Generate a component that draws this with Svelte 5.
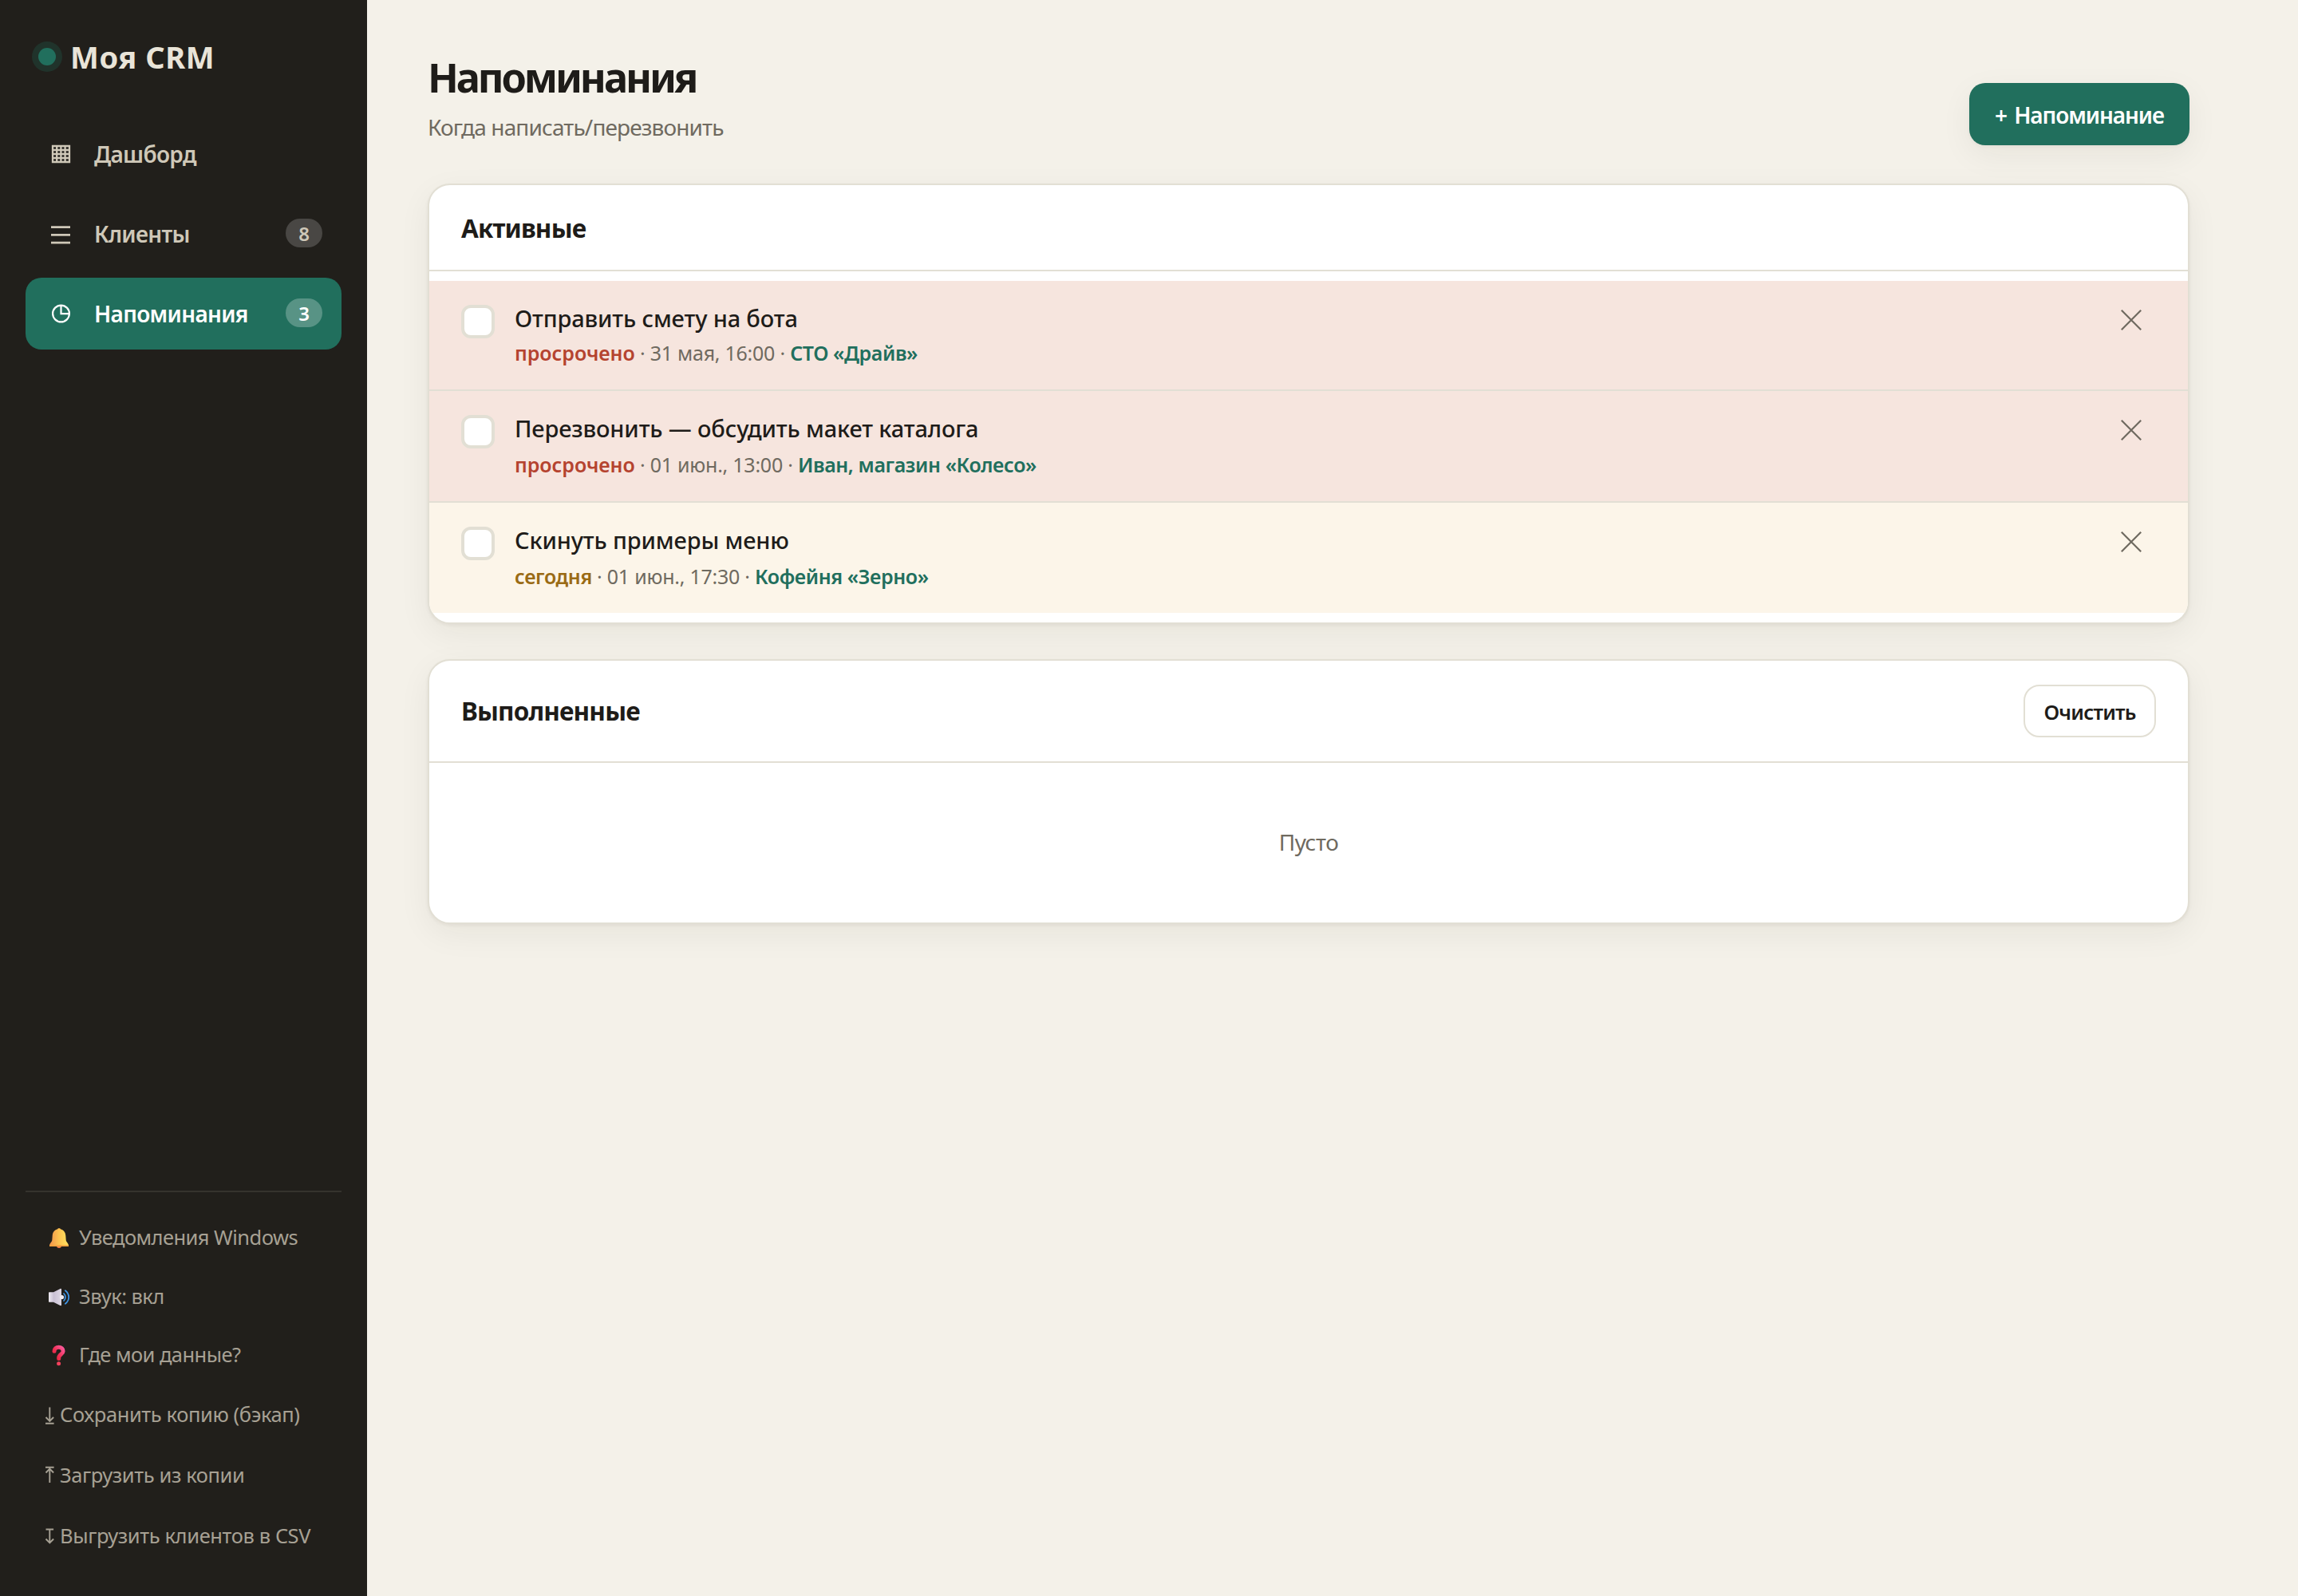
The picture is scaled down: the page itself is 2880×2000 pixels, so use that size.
<script>
  let nav = [
    { id: 'dashboard', label: 'Дашборд', count: 0 },
    { id: 'clients', label: 'Клиенты', count: 8 },
    { id: 'reminders', label: 'Напоминания', count: 3 }
  ];
  let page = 'reminders';

  let tools = [
    { icon: 'bell', label: 'Уведомления Windows' },
    { icon: 'sound', label: 'Звук: вкл' },
    { icon: 'help', label: 'Где мои данные?' },
    { icon: 'save', label: 'Сохранить копию (бэкап)' },
    { icon: 'load', label: 'Загрузить из копии' },
    { icon: 'csv', label: 'Выгрузить клиентов в CSV' }
  ];

  let reminders = [
    { text: 'Отправить смету на бота', status: 'overdue', date: '31 мая, 16:00', client: 'СТО «Драйв»' },
    { text: 'Перезвонить — обсудить макет каталога', status: 'overdue', date: '01 июн., 13:00', client: 'Иван, магазин «Колесо»' },
    { text: 'Скинуть примеры меню', status: 'today', date: '01 июн., 17:30', client: 'Кофейня «Зерно»' }
  ];
  const statusLabel = { overdue: 'просрочено', today: 'сегодня' };

  function remove(item) {
    reminders = reminders.filter((r) => r !== item);
  }
</script>

<div class="app">
  <aside>
    <div class="brand"><span class="dot"></span>Моя CRM</div>

    <nav>
      {#each nav as item (item.id)}
        <button class="nav-item" class:active={page === item.id} on:click={() => (page = item.id)}>
          <svg width="24" height="24" viewBox="0 0 24 24" fill="none" stroke="currentColor">
            {#if item.id === 'dashboard'}
              <path stroke-width="2.3" d="M2 2h21v20H2zM7.2 2v20M12.4 2v20M17.6 2v20M2 7h21M2 12h21M2 17h21" />
            {:else if item.id === 'clients'}
              <path stroke-width="2.7" d="M0 3.6h24M0 13.4h24M0 23.2h24" />
            {:else}
              <circle cx="12.5" cy="12" r="10.4" stroke-width="2.2" />
              <path stroke-width="2.2" d="M12.5 1.6V12.2H23" />
            {/if}
          </svg>
          <span class="label">{item.label}</span>
          {#if item.count}
            <span class="badge">{item.count}</span>
          {/if}
        </button>
      {/each}
    </nav>

    <div class="tools">
      {#each tools as tool (tool.icon)}
        {#if tool.icon === 'bell' || tool.icon === 'sound' || tool.icon === 'help'}
          <button class="tool">
            <svg width="36" height="36" viewBox="0 0 36 36">
              {#if tool.icon === 'bell'}
                <defs>
                  <linearGradient id="bell" x1="0" x2="1">
                    <stop offset="0" stop-color="#f0924a" />
                    <stop offset="0.5" stop-color="#fcc350" />
                    <stop offset="1" stop-color="#ffe260" />
                  </linearGradient>
                </defs>
                <circle cx="18" cy="29" r="3" fill="#f2804a" />
                <circle cx="18" cy="9" r="2" fill="#f6b04a" />
                <path fill="url(#bell)" d="M18 8c-5 0-8 3.600-8.300 8.500L9.300 22c-.2 2.500-3.300 4-3.300 7 0 .7.400 1 1 1h22c.6 0 1-.3 1-1 0-3-3.100-4.500-3.300-7l-.4-5.500C26 11.600 23 8 18 8z" />
                <path fill="#f3a23f" d="M6.200 28.200h23.600c.4 1-.1 1.800-.8 1.800H7c-.8 0-1.200-.8-.8-1.800z" />
              {:else if tool.icon === 'sound'}
                <defs>
                  <linearGradient id="horn" x1="0" x2="1">
                    <stop offset="0" stop-color="#efebf2" />
                    <stop offset="0.4" stop-color="#c9c0d4" />
                    <stop offset="1" stop-color="#ded8e4" />
                  </linearGradient>
                </defs>
                <path fill="url(#horn)" d="M6 13.200h5L19.500 9c.8-.4 1.500 0 1.500.8v19.400c0 .8-.7 1.200-1.500.8L11 25.800H6c-.6 0-1-.4-1-1V14.200c0-.6.4-1 1-1z" />
                <circle cx="21.500" cy="19.500" r="2.600" fill="#efebf2" />
                <g fill="none" stroke="#3f97ea" stroke-width="1.700" stroke-linecap="round">
                  <path d="M24 15c2.600 2.500 2.600 6.500 0 9" />
                  <path d="M25.800 11.200c5.800 4.300 5.800 12.300 0 16.600" />
                </g>
              {:else}
                <defs>
                  <linearGradient id="help" x1="1" y1="0" x2="0" y2="1">
                    <stop offset="0" stop-color="#fb5a9c" />
                    <stop offset="0.6" stop-color="#ee2f52" />
                    <stop offset="1" stop-color="#e8273f" />
                  </linearGradient>
                </defs>
                <path fill="none" stroke="url(#help)" stroke-width="5" stroke-linecap="round" stroke-linejoin="round" d="M12 14.200c0-3 2.300-5 5.500-5 3.300 0 5.600 2 5.600 5 0 3.800-5.400 3.800-5.400 8.400v1" />
                <circle cx="17.600" cy="29.800" r="2.500" fill="#f4405c" />
              {/if}
            </svg>
            {tool.label}
          </button>
        {:else}
          <button class="tool arrow">
            <svg width="12" height="22" viewBox="0 0 12 22" fill="none" stroke="currentColor" stroke-width="1.900">
              {#if tool.icon === 'save'}
                <path d="M6.300 2.500v18M1.500 15l4.800 5 4.800-5M1 22.700h10.600" />
              {:else if tool.icon === 'load'}
                <path d="M6.300 21V3M1.500 8.500l4.800-5 4.800 5M1 1.800h10.600" />
              {:else}
                <path d="M6.300 3.500v17M1.500 15.500l4.800 5 4.800-5M1.500 3.500h9.600" />
              {/if}
            </svg>
            {tool.label}
          </button>
        {/if}
      {/each}
    </div>
  </aside>

  <main>
    <header>
      <div>
        <h1>Напоминания</h1>
        <p class="subtitle">Когда написать/перезвонить</p>
      </div>
      <button class="primary">+ Напоминание</button>
    </header>

    <section class="card">
      <div class="card-head"><h2>Активные</h2></div>
      <div class="list">
        {#each reminders as item (item.text)}
          <div class="row {item.status}">
            <button class="check" aria-label="Выполнено"></button>
            <div class="body">
              <div class="title">{item.text}</div>
              <div class="meta"><span class="status">{statusLabel[item.status]}</span> · {item.date} · <span class="client">{item.client}</span></div>
            </div>
            <button class="remove" aria-label="Удалить" on:click={() => remove(item)}>
              <svg width="26" height="26" viewBox="0 0 26 26" fill="none" stroke="currentColor" stroke-width="2.200">
                <path d="M.8.8l24.400 24.400M25.200.8L.8 25.200" />
              </svg>
            </button>
          </div>
        {/each}
      </div>
    </section>

    <section class="card done">
      <div class="card-head">
        <h2>Выполненные</h2>
        <button class="clear">Очистить</button>
      </div>
      <div class="empty">Пусто</div>
    </section>
  </main>
</div>

<style>
  :global(body) {
    margin: 0;
    background: #f4f1e9;
  }

  .app {
    display: flex;
    height: 2000px;
    font-family: "Noto Sans", "Open Sans", sans-serif;
    color: #1e1c19;
    background: #f4f1e9;
  }

  * {
    box-sizing: border-box;
  }

  button {
    font: inherit;
    color: inherit;
    border: none;
    background: none;
    padding: 0;
    cursor: pointer;
  }

  svg {
    display: block;
    flex: none;
    overflow: visible;
  }

  aside {
    display: flex;
    flex-direction: column;
    width: 460px;
    flex: none;
    padding: 46px 32px 38.5px;
    background: #211f1b;
  }

  .brand {
    display: flex;
    align-items: center;
    gap: 18px;
    height: 50px;
    padding-left: 16px;
    font-size: 38px;
    font-weight: 700;
    letter-spacing: 0.6px;
    color: #e9e4d8;
  }

  .dot {
    width: 22px;
    height: 22px;
    border-radius: 50%;
    background: #216f5d;
    box-shadow: 0 0 0 8px rgba(33, 111, 93, 0.25);
  }

  nav {
    display: flex;
    flex-direction: column;
    gap: 10px;
    margin-top: 52px;
  }

  .nav-item {
    display: flex;
    align-items: center;
    height: 90px;
    padding: 0 24px 0 32px;
    border-radius: 20px;
    font-size: 28px;
    font-weight: 600;
    letter-spacing: -0.7px;
    color: #cfc8b8;
  }

  .nav-item.active {
    background: #216f5d;
    color: #fff;
  }

  .label {
    margin-left: 30px;
  }

  .badge {
    display: flex;
    align-items: center;
    justify-content: center;
    width: 46px;
    height: 36px;
    margin: 0 0 2px auto;
    border-radius: 18px;
    background: rgba(255, 255, 255, 0.18);
    font-size: 24px;
    letter-spacing: 0;
  }

  .active .badge {
    background: rgba(255, 255, 255, 0.25);
  }

  .tools {
    display: flex;
    flex-direction: column;
    margin-top: auto;
    padding-top: 19px;
    border-top: 2px solid #35332d;
  }

  .tool {
    display: flex;
    align-items: center;
    gap: 7px;
    height: 73.7px;
    padding-left: 24px;
    font-size: 25.5px;
    letter-spacing: -0.55px;
    color: #a7a194;
    white-space: nowrap;
  }

  .tool.arrow {
    gap: 7px;
    height: 75.8px;
    letter-spacing: -0.4px;
  }

  main {
    width: 2360px;
    padding: 57px 76px;
  }

  header {
    display: flex;
    align-items: flex-end;
    justify-content: space-between;
    margin-bottom: 48px;
  }

  h1, h2, p {
    margin: 0;
  }

  h1 {
    font-size: 50.5px;
    line-height: 80px;
    font-weight: 700;
    letter-spacing: -3.1px;
  }

  .subtitle {
    font-size: 28px;
    line-height: 45px;
    letter-spacing: -0.87px;
    color: #6f6a60;
  }

  .primary {
    width: 276px;
    height: 78px;
    padding-top: 1px;
    border-radius: 20px;
    background: #216f5d;
    color: #fff;
    font-size: 28px;
    font-weight: 600;
    letter-spacing: -1.1px;
    word-spacing: 3px;
    white-space: nowrap;
    box-shadow: 0 2px 4px rgba(30, 28, 24, 0.04), 0 12px 40px rgba(30, 28, 24, 0.06);
  }

  .card {
    border: 2px solid #e2dfd4;
    border-radius: 28px;
    background: #fff;
    overflow: hidden;
    box-shadow: 0 2px 4px rgba(30, 28, 24, 0.05), 0 12px 40px rgba(30, 28, 24, 0.06);
  }

  .card + .card {
    margin-top: 44px;
  }

  .card-head {
    display: flex;
    align-items: center;
    justify-content: space-between;
    height: 108px;
    padding: 0 40px;
    border-bottom: 2px solid #e2dfd4;
  }

  .done .card-head {
    height: 128px;
  }

  h2 {
    margin-top: 2px;
    font-size: 31.5px;
    line-height: 44px;
    font-weight: 700;
    letter-spacing: -0.85px;
  }

  .done h2 {
    margin-top: 0;
    margin-bottom: 1px;
  }

  .list {
    padding: 12px 0;
  }

  .row {
    display: flex;
    align-items: flex-start;
    height: 140px;
    padding: 0 58px 0 40px;
    border-bottom: 2px solid #e2dfd4;
  }

  .row:first-child,
  .row:last-child {
    height: 138px;
  }

  .row:last-child {
    border-bottom: none;
  }

  .row.overdue {
    background: #f6e5de;
  }

  .row.today {
    background: #fcf5e9;
  }

  .check {
    width: 42px;
    height: 42px;
    margin-top: 30px;
    border: 4px solid #e2dfd4;
    border-radius: 12px;
    background: #fff;
  }

  .body {
    flex: 1;
    margin: 26px 0 0 25px;
  }

  .title {
    font-size: 29px;
    line-height: 42px;
    font-weight: 500;
    letter-spacing: -0.15px;
  }

  .meta {
    margin-top: 4px;
    font-size: 25px;
    line-height: 40px;
    letter-spacing: -0.25px;
    color: #6f6a60;
  }

  .row:first-child .meta {
    margin-top: 2px;
  }

  .status {
    font-weight: 600;
    letter-spacing: -0.05px;
  }

  .overdue .status {
    color: #b5432f;
  }

  .today .status {
    color: #9a6b15;
    letter-spacing: -0.4px;
  }

  .client {
    font-weight: 600;
    letter-spacing: -0.4px;
    color: #216f5d;
  }

  .remove {
    margin-top: 36px;
    color: #6f6a60;
  }

  .clear {
    width: 166px;
    height: 66px;
    padding-top: 1px;
    border: 2px solid #e2dfd4;
    border-radius: 20px;
    font-size: 25.5px;
    font-weight: 600;
    letter-spacing: -0.8px;
  }

  .empty {
    height: 200px;
    line-height: 198px;
    text-align: center;
    font-size: 28px;
    letter-spacing: -0.5px;
    color: #6f6a60;
  }
</style>
